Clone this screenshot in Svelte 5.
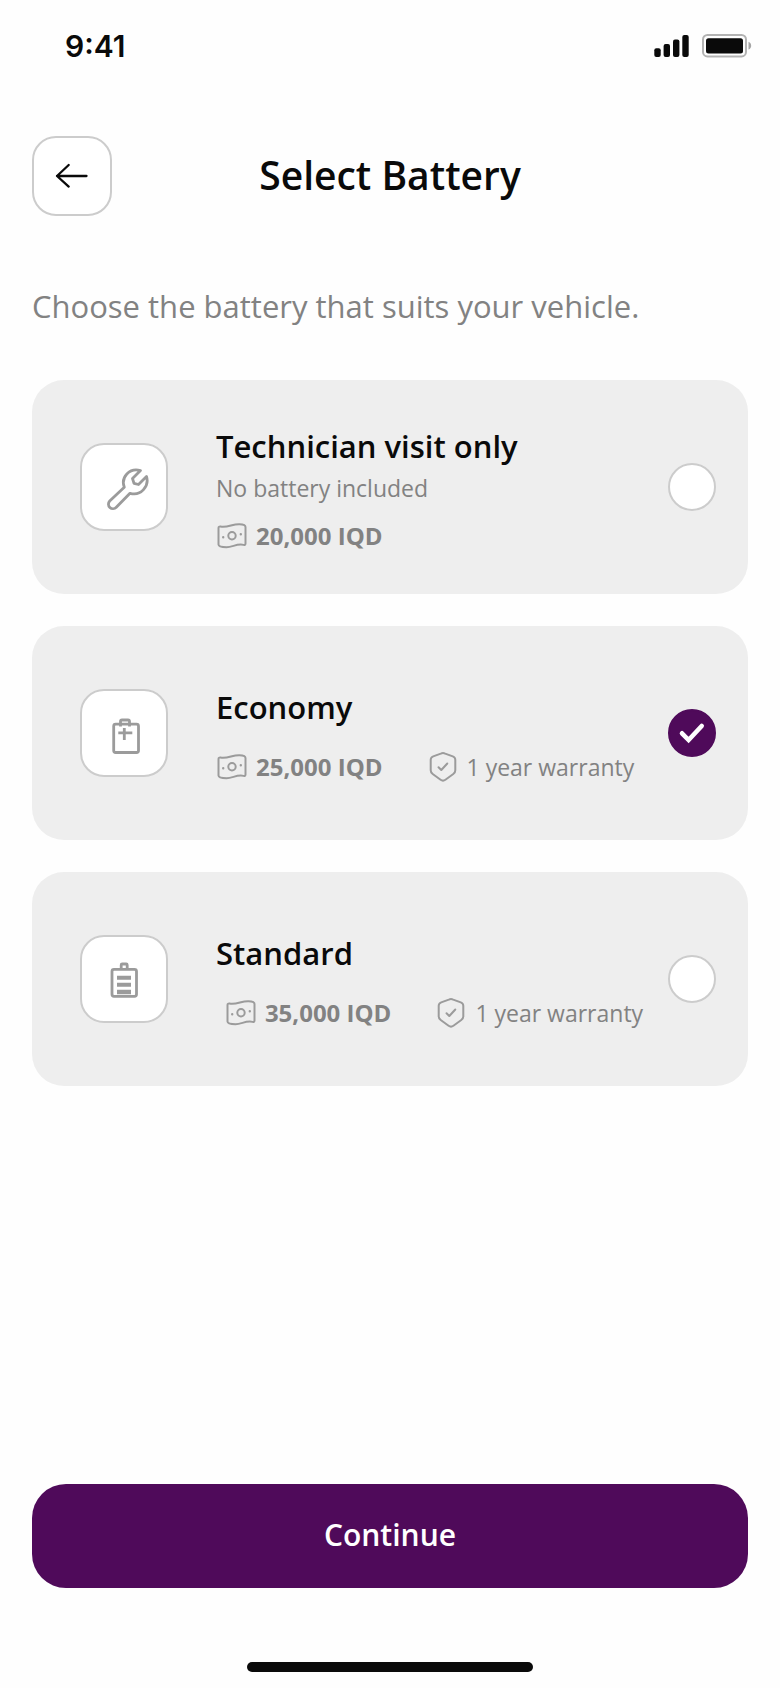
<script>
	const options = [
		{
			id: "visit",
			icon: "wrench",
			title: "Technician visit only",
			note: "No battery included",
			price: "20,000 IQD",
		},
		{
			id: "economy",
			icon: "battery-plus",
			title: "Economy",
			price: "25,000 IQD",
			warranty: "1 year warranty",
		},
		{
			id: "standard",
			icon: "battery-full",
			title: "Standard",
			price: "35,000 IQD",
			warranty: "1 year warranty",
			centered: true,
		},
	];

	let selected = "economy";
</script>

<main class="screen">
	<div class="status-bar">
		<span class="clock">9:41</span>
		<div class="status-icons">
			<svg width="36" height="24" viewBox="0 0 36 24" aria-hidden="true">
				<rect x="0.3" y="14.3" width="6.4" height="8.7" rx="2" />
				<rect x="9.6" y="10" width="6.4" height="13" rx="2" />
				<rect x="19" y="5.6" width="6.4" height="17.4" rx="2" />
				<rect x="28.3" y="1" width="6.4" height="22" rx="2" />
			</svg>
			<svg width="50" height="24" viewBox="0 0 50 24" aria-hidden="true">
				<rect class="shell" x="1" y="1" width="43" height="21.4" rx="4.5" />
				<rect x="4" y="4.2" width="37" height="15.4" rx="2.5" />
				<path class="nub" d="M46.500 7.800c3.600 1.300 3.600 6.500 0 7.800z" />
			</svg>
		</div>
	</div>

	<header class="header">
		<button class="back-btn" type="button" aria-label="Back">
			<svg viewBox="2 2 76 76" aria-hidden="true">
				<path d="M54.500 40H25M36.700 29 25 40l11.700 10.600" />
			</svg>
		</button>
		<h1>Select Battery</h1>
	</header>

	<p class="intro">Choose the battery that suits your vehicle.</p>

	<div class="options" role="radiogroup" aria-label="Battery">
		{#each options as option (option.id)}
			<label class="card">
				<span class="tile">
					<svg viewBox="2 2 84 84" aria-hidden="true">
						{#if option.icon === "wrench"}
							<path
								d="M60.500 27.500 52.500 35.500 54 40.300l4.500 1.200L66.500 33.500C69.500 43 61 53.500 50 50.300L36.300 64.300a4.300 4.300 0 0 1-6.600-6.300L44.300 44.300C40.500 34 49.500 24.500 60.500 27.500Z"
							/>
						{:else if option.icon === "battery-plus"}
							<rect x="33.700" y="35.200" width="24.800" height="28.300" rx="2" />
							<path d="M40.500 37.500v-5a1.500 1.500 0 0 1 1.500-1.500h6a1.500 1.500 0 0 1 1.500 1.500v5" />
							<path d="M38.300 43.800h14M44.300 39v12" />
						{:else}
							<rect x="32" y="34.300" width="24.500" height="27" rx="2" />
							<path d="M41.200 34v-4a1 1 0 0 1 1-1h4a1 1 0 0 1 1 1v4" />
							<path class="bars" d="M37 40.700h14v4H37zM37 47.700h14v4H37zM37 54.700h14v4.500H37z" />
						{/if}
					</svg>
				</span>

				<span class="body">
					<span class="title">{option.title}</span>
					{#if option.note}
						<span class="note">{option.note}</span>
					{/if}
					<span class="meta" class:centered={option.centered} class:tight={option.note}>
						<span class="meta-item price">
							<svg width="32" height="32" viewBox="0 0 32 32" aria-hidden="true">
								<path
									d="M2.500 8c0-1.200.8-1.700 2-1.500 7 1.400 12-2.600 19-2.300 2.500.100 6 .600 6 2.800V23.500c0 1.300-.9 1.700-2 1.400-6.500-1.500-11 2.300-17 2.300-4 0-8-.500-8-2.700Z"
								/>
								<circle cx="16" cy="15.800" r="3.700" />
								<path class="dots" d="M7.200 17.200h.01M24.800 14.300h.01" />
							</svg>
							{option.price}
						</span>
						{#if option.warranty}
							<span class="meta-item">
								<svg width="32" height="32" viewBox="0 0 32 32" aria-hidden="true">
									<path
										d="M13.800 2.600a5 5 0 0 1 4.400 0l7.600 2.800c1.600.600 2.500 1.700 2.500 3.400v10.500c0 1.600-.7 2.800-2 3.700l-7.900 5.700a4 4 0 0 1-4.800 0L5.700 23c-1.300-.9-2-2.100-2-3.700V8.800c0-1.700.9-2.800 2.500-3.400Z"
									/>
									<path d="M11.500 16.200 14.300 19l6-6.500" />
								</svg>
								{option.warranty}
							</span>
						{/if}
					</span>
				</span>

				<span class="radio">
					<input type="radio" name="battery" value={option.id} bind:group={selected} />
					{#if selected === option.id}
						<svg viewBox="0 0 48 48" aria-hidden="true">
							<path d="M14 24.300l6.600 6.700L33.700 17" />
						</svg>
					{/if}
				</span>
			</label>
		{/each}
	</div>

	<footer class="footer">
		<button class="continue-btn" type="button">Continue</button>
		<div class="home-indicator"></div>
	</footer>
</main>

<style>
	:global(body) {
		margin: 0;
		background: #fefefe;
	}

	.screen {
		--fg: #0a0a0a;
		--muted: #828282;
		--icon: #9b9b9b;
		--line: #cccccc;
		--accent: #4f0a5a;

		display: flex;
		flex-direction: column;
		min-height: 100vh;
		box-sizing: border-box;
		color: var(--fg);
		font-family: "Open Sans", "Noto Sans", sans-serif;
	}

	.status-bar {
		display: flex;
		align-items: center;
		justify-content: space-between;
		height: 92px;
		padding: 0 28px 0 65px;
	}

	.clock {
		font-family: Inter, sans-serif;
		font-size: 30px;
		font-weight: 600;
	}

	.status-icons {
		display: flex;
		gap: 12px;
		fill: var(--fg);
	}

	.shell {
		fill: none;
		stroke: #b3b3b3;
		stroke-width: 2;
	}

	.nub {
		fill: #a6a6a6;
	}

	.header {
		display: grid;
		grid-template-columns: 80px 1fr 80px;
		align-items: center;
		padding: 44px 32px 0;
	}

	.back-btn {
		width: 80px;
		height: 80px;
		padding: 0;
		border: 2px solid var(--line);
		border-radius: 24px;
		background: #fff;
		cursor: pointer;
	}

	.back-btn svg {
		display: block;
		fill: none;
		stroke: var(--fg);
		stroke-width: 2.3;
		stroke-linecap: round;
		stroke-linejoin: round;
	}

	h1 {
		margin: 0;
		padding-bottom: 2px;
		font-size: 39px;
		font-weight: 600;
		line-height: 48px;
		text-align: center;
	}

	.intro {
		margin: 70px 32px 54px;
		color: var(--muted);
		font-size: 31px;
		line-height: 40px;
	}

	.options {
		display: flex;
		flex-direction: column;
		gap: 32px;
		padding: 0 32px;
	}

	.card {
		display: flex;
		align-items: center;
		min-height: 214px;
		box-sizing: border-box;
		padding: 24px 32px 24px 48px;
		border-radius: 32px;
		background: #eeeeee;
		cursor: pointer;
	}

	.tile {
		flex: none;
		width: 88px;
		height: 88px;
		box-sizing: border-box;
		border: 2px solid var(--line);
		border-radius: 24px;
		background: #fff;
	}

	.tile svg {
		display: block;
		fill: none;
		stroke: var(--icon);
		stroke-width: 2.8;
		stroke-linejoin: round;
	}

	.tile .bars {
		fill: var(--icon);
		stroke: none;
	}

	.body {
		display: flex;
		flex: 1;
		flex-direction: column;
		padding-top: 4px;
		margin: 0 16px 0 48px;
	}

	.title {
		font-size: 31px;
		font-weight: 600;
		line-height: 40px;
	}

	.note {
		margin-top: 6px;
		color: var(--muted);
		font-size: 23px;
		line-height: 32px;
	}

	.meta {
		display: flex;
		gap: 44px;
		margin-top: 24px;
	}

	.meta.tight {
		margin-top: 16px;
	}

	.meta.centered {
		justify-content: center;
	}

	.meta-item {
		display: flex;
		align-items: center;
		gap: 8px;
		color: var(--muted);
		font-size: 23px;
		line-height: 32px;
		white-space: nowrap;
	}

	.meta-item svg {
		fill: none;
		stroke: var(--icon);
		stroke-width: 2;
		stroke-linecap: round;
		stroke-linejoin: round;
	}

	.meta-item .dots {
		stroke-width: 2.4;
	}

	.price {
		font-size: 24px;
		font-weight: 700;
	}

	.radio {
		display: grid;
		flex: none;
		width: 48px;
		height: 48px;
	}

	.radio input,
	.radio svg {
		grid-area: 1 / 1;
	}

	.radio input {
		appearance: none;
		margin: 0;
		border: 2px solid var(--line);
		border-radius: 50%;
		background: #fff;
		cursor: pointer;
	}

	.radio input:checked {
		border-color: var(--accent);
		background: var(--accent);
	}

	.radio svg {
		z-index: 1;
		fill: none;
		stroke: #fff;
		stroke-width: 4.6;
		stroke-linecap: round;
		pointer-events: none;
	}

	.footer {
		display: flex;
		flex-direction: column;
		align-items: center;
		gap: 74px;
		margin-top: auto;
		padding: 32px 32px 16px;
	}

	.continue-btn {
		width: 100%;
		height: 104px;
		padding: 0 0 4px;
		border: none;
		border-radius: 34px;
		background: var(--accent);
		color: #fff;
		font-family: inherit;
		font-size: 30px;
		font-weight: 600;
		cursor: pointer;
	}

	.home-indicator {
		width: 40%;
		max-width: 288px;
		height: 10px;
		border-radius: 5px;
		background: var(--fg);
	}
</style>
